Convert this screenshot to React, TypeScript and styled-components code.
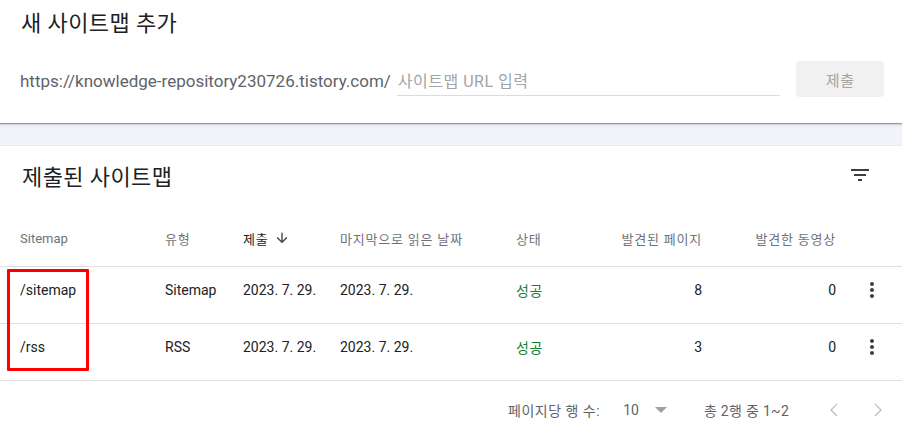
import React from "react";
import styled, { createGlobalStyle } from "styled-components";

const Global = createGlobalStyle`
  html, body { margin: 0; padding: 0; background: #ffffff; }
  body { font-family: Roboto, "Noto Sans CJK KR", sans-serif; color: #202124; }
  * { box-sizing: border-box; }
`;

const Page = styled.div`
  width: 902px;
  height: 435px;
  position: relative;
  overflow: hidden;
  background: #fff;
`;

const TopCard = styled.section`
  height: 123px;
  padding: 10px 18px 0 20px;
  background: #fff;
  box-shadow: 0 1px 1px rgba(60, 64, 67, 0.45), 0 2px 3px rgba(60, 64, 67, 0.15);
  position: relative;
  z-index: 1;
`;

const Title = styled.h2`
  margin: 0 0 0 1px;
  font-family: Roboto, "Noto Sans CJK KR", sans-serif;
  font-weight: 400;
  font-size: 22px;
  line-height: 28px;
  color: #202124;
  letter-spacing: 0.4px;
`;

const FormRow = styled.div`
  display: flex;
  align-items: center;
  margin-top: 23px;
  height: 36px;
`;

const Prefix = styled.span`
  font-size: 17px;
  color: #5f6368;
  white-space: nowrap;
  padding-top: 4px;
`;

const InputWrap = styled.div`
  margin-left: 6px;
  width: 385px;
  height: 34px;
  border-bottom: 1px solid #dadce0;
  display: flex;
  align-items: flex-end;
  padding-bottom: 4px;
`;

const Input = styled.input`
  border: none;
  outline: none;
  width: 100%;
  padding: 0 0 0 1px;
  font-family: Roboto, "Noto Sans CJK KR", sans-serif;
  font-size: 16px;
  letter-spacing: 0.5px;
  color: #202124;
  background: transparent;
  &::placeholder { color: #a0a4a8; }
`;

const SubmitButton = styled.button`
  margin-left: 16px;
  width: 88px;
  height: 36px;
  border: none;
  border-radius: 4px;
  background: #f1f1f1;
  color: #a3a3a3;
  font-family: Roboto, "Noto Sans CJK KR", sans-serif;
  font-size: 15px;
  letter-spacing: 0.5px;
  padding: 0;
`;

const Band = styled.div`
  height: 23px;
  background: #f1f4fa;
  box-shadow: inset 0 -1px 1px rgba(60, 64, 67, 0.06);
`;

const ListCard = styled.section`
  background: #fff;
`;

const ListHeader = styled.div`
  display: flex;
  align-items: center;
  justify-content: space-between;
  height: 64px;
  padding: 0 30px 0 21px;
`;

const IconButton = styled.button`
  border: none;
  background: transparent;
  padding: 0;
  width: 24px;
  height: 24px;
  margin-bottom: 7px;
  display: flex;
  align-items: center;
  justify-content: center;
  color: #3c4043;
`;

const COLS = "145px 78px 97px 176px 80px 106px 134px 66px";

const Row = styled.div<{ $body?: boolean }>`
  display: grid;
  grid-template-columns: ${COLS};
  padding-left: 20px;
  padding-bottom: ${(p) => (p.$body ? "11px" : "0")};
  align-items: center;
  height: 57px;
  border-bottom: 1px solid #e0e0e0;
`;

const HeadCell = styled.div<{ $right?: boolean; $active?: boolean; $ko?: boolean }>`
  font-size: 13px;
  letter-spacing: ${(p) => (p.$ko ? "0.8px" : "0")};
  color: ${(p) => (p.$active ? "#202124" : "#6f7378")};
  display: flex;
  align-items: center;
  justify-content: ${(p) => (p.$right ? "flex-end" : "flex-start")};
  gap: 5px;
  white-space: nowrap;
`;

const Cell = styled.div<{ $right?: boolean; $ok?: boolean }>`
  font-size: 14px;
  color: ${(p) => (p.$ok ? "#188038" : "#202124")};
  letter-spacing: ${(p) => (p.$ok ? "0.5px" : "0")};
  text-align: ${(p) => (p.$right ? "right" : "left")};
  white-space: nowrap;
`;

const MenuCell = styled.div`
  display: flex;
  justify-content: flex-start;
  padding-left: 24px;
  color: #3c4043;
`;

const Footer = styled.div`
  display: flex;
  align-items: center;
  height: 57px;
  padding-left: 508px;
  font-size: 14px;
  color: #5f6368;
`;

const FooterLabel = styled.span`
  letter-spacing: 0.5px;
`;

const PageSize = styled.span`
  margin-left: 23px;
  display: flex;
  align-items: center;
  gap: 15px;
  font-size: 14px;
`;

const Range = styled.span`
  margin-left: 36px;
  font-size: 14px;
  letter-spacing: 0.3px;
`;

const Pager = styled.div`
  margin-left: 40px;
  display: flex;
  gap: 34px;
  color: #bdc1c6;
`;

const Highlight = styled.div`
  position: absolute;
  left: 7px;
  top: 269px;
  width: 82px;
  height: 102px;
  border: 3px solid #ff0000;
  border-radius: 1px;
  pointer-events: none;
`;

const FilterIcon = () => (
  <svg width="24" height="24" viewBox="0 0 24 24" fill="currentColor">
    <path d="M10 18h4v-2h-4v2zM3 6v2h18V6H3zm3 7h12v-2H6v2z" />
  </svg>
);

const ArrowDown = () => (
  <svg width="16" height="16" viewBox="0 0 24 24" fill="#3c4043">
    <path d="M20 12l-1.41-1.41L13 16.17V4h-2v12.17l-5.58-5.59L4 12l8 8 8-8z" />
  </svg>
);

const MoreVert = () => (
  <svg width="24" height="24" viewBox="0 0 24 24" fill="currentColor">
    <path d="M12 8c1.1 0 2-.9 2-2s-.9-2-2-2-2 .9-2 2 .9 2 2 2zm0 2c-1.1 0-2 .9-2 2s.9 2 2 2 2-.9 2-2-.9-2-2-2zm0 6c-1.1 0-2 .9-2 2s.9 2 2 2 2-.9 2-2-.9-2-2-2z" />
  </svg>
);

const DropTriangle = () => (
  <svg width="14" height="8" viewBox="0 0 14 8" fill="#9aa0a6">
    <path d="M1 1h12L7 7z" />
  </svg>
);

const Chevron = ({ dir }: { dir: "left" | "right" }) => (
  <svg width="10" height="14" viewBox="0 0 10 14" fill="none" stroke="currentColor" strokeWidth="1.4">
    {dir === "left" ? <polyline points="8,1 2,7 8,13" /> : <polyline points="2,1 8,7 2,13" />}
  </svg>
);

const rows = [
  { path: "/sitemap", type: "Sitemap", sub: "2023. 7. 29.", read: "2023. 7. 29.", pages: 8, videos: 0 },
  { path: "/rss", type: "RSS", sub: "2023. 7. 29.", read: "2023. 7. 29.", pages: 3, videos: 0 },
];

export default function App() {
  return (
    <Page>
      <Global />
      <TopCard>
        <Title>새 사이트맵 추가</Title>
        <FormRow>
          <Prefix>https://knowledge-repository230726.tistory.com/</Prefix>
          <InputWrap>
            <Input placeholder="사이트맵 URL 입력" />
          </InputWrap>
          <SubmitButton>제출</SubmitButton>
        </FormRow>
      </TopCard>
      <Band />
      <ListCard>
        <ListHeader>
          <Title>제출된 사이트맵</Title>
          <IconButton aria-label="filter">
            <FilterIcon />
          </IconButton>
        </ListHeader>
        <Row>
          <HeadCell>Sitemap</HeadCell>
          <HeadCell $ko>유형</HeadCell>
          <HeadCell $ko $active>
            제출 <ArrowDown />
          </HeadCell>
          <HeadCell $ko>마지막으로 읽은 날짜</HeadCell>
          <HeadCell $ko>상태</HeadCell>
          <HeadCell $ko $right>발견된 페이지</HeadCell>
          <HeadCell $ko $right>발견한 동영상</HeadCell>
          <HeadCell />
        </Row>
        {rows.map((r) => (
          <Row $body key={r.path}>
            <Cell>{r.path}</Cell>
            <Cell>{r.type}</Cell>
            <Cell>{r.sub}</Cell>
            <Cell>{r.read}</Cell>
            <Cell $ok>성공</Cell>
            <Cell $right>{r.pages}</Cell>
            <Cell $right>{r.videos}</Cell>
            <MenuCell>
              <MoreVert />
            </MenuCell>
          </Row>
        ))}
        <Footer>
          <FooterLabel>페이지당 행 수:</FooterLabel>
          <PageSize>
            10 <DropTriangle />
          </PageSize>
          <Range>총 2행 중 1~2</Range>
          <Pager>
            <Chevron dir="left" />
            <Chevron dir="right" />
          </Pager>
        </Footer>
      </ListCard>
      <Highlight />
    </Page>
  );
}
